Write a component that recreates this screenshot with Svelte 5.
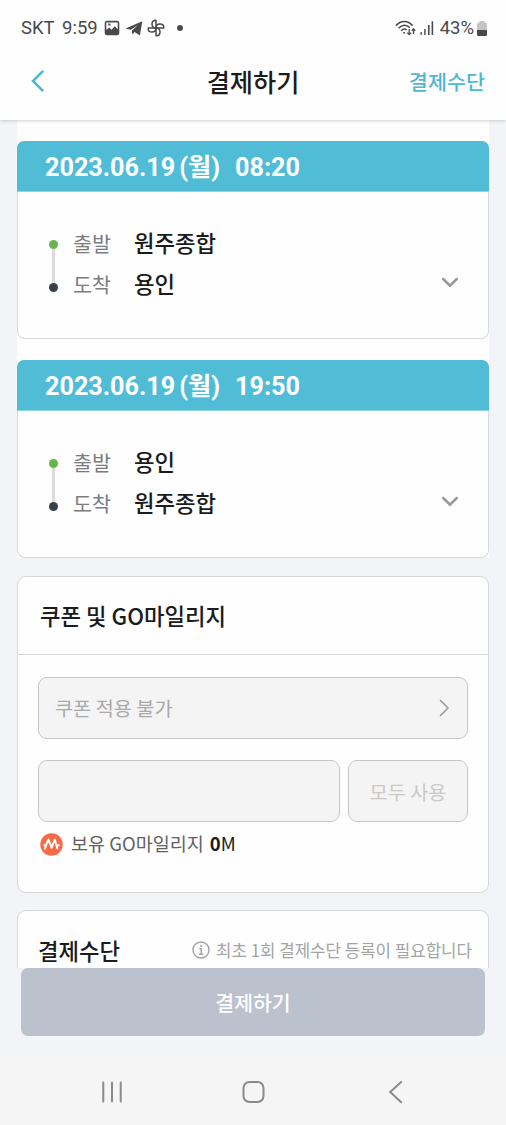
<script>
  const trips = [
    { date: '2023.06.19', day: '(월)', time: '08:20', from: '원주종합', to: '용인' },
    { date: '2023.06.19', day: '(월)', time: '19:50', from: '용인', to: '원주종합' }
  ];
</script>

<div class="phone">
  <div class="status">
    <span class="carrier">SKT</span>
    <span class="clock">9:59</span>
    <svg class="s-img" width="16" height="16" viewBox="0 0 16 16">
      <path fill="#4a4a4a" fill-rule="evenodd" d="M3 .7h10a2.300 2.300 0 0 1 2.300 2.300v10a2.300 2.300 0 0 1-2.300 2.300H3A2.300 2.300 0 0 1 .7 13V3A2.300 2.300 0 0 1 3 .7ZM2.300 9.800l2.900-2.300 2.300 2.200 3.300-3.500 2.900 3V2.500H2.300ZM4.200 3.400h2.200v2.200H4.200Z" />
    </svg>
    <svg class="s-tg" width="18" height="16" viewBox="0 0 18 16">
      <path fill="#4a4a4a" d="M.5 8.400 17.300 1.200 14.900 15.600 9.600 11.900 7.500 14.500 6.800 10.800 12.600 5.300 5.800 9.700Z" />
    </svg>
    <svg class="s-fan" width="18" height="18" viewBox="0 0 18 18" fill="none" stroke="#4a4a4a" stroke-width="1.500" stroke-linejoin="round">
      <path d="M9 9V1.200H8.600C6.200 1.200 5 3 5 5c0 2.200 1.500 4 4 4Z" />
      <path d="M9 9H16.800V8.600C16.800 6.200 15 5 13 5c-2.200 0-4 1.500-4 4Z" />
      <path d="M9 9V16.800H9.400C11.800 16.800 13 15 13 13c0-2.200-1.500-4-4-4Z" />
      <path d="M9 9H1.200V9.400C1.200 11.800 3 13 5 13c2.200 0 4-1.500 4-4Z" />
    </svg>
    <span class="dot"></span>
    <span class="grow"></span>
    <svg class="s-wifi" width="21" height="16" viewBox="0 0 21 16" fill="none" stroke="#4a4a4a" stroke-width="1.600">
      <path d="M1 5.600C5.800.2 12.800.2 17.600 5.600" />
      <path d="M3.600 8.300C7.200 4.300 11.400 4.300 14.800 7.600" />
      <path d="M6.200 10.700C8.200 8.700 10 8.600 11.800 9.800" />
      <circle cx="9.200" cy="12.700" r="1" fill="#4a4a4a" stroke="none" />
      <path stroke-width="1.300" d="M14.200 9v5.500M12.200 12.600l2 2 2-2M18.500 14V9M16.700 10.800l1.800-1.900 1.800 1.900" />
    </svg>
    <svg class="s-sig" width="14" height="14" viewBox="0 0 14 14" fill="#4a4a4a">
      <path d="M.5 11h1.300V14H.5ZM4.200 8h1.400V14H4.200ZM8 4h1.600v10H8ZM11.600.3h1.600V14h-1.600Z" />
    </svg>
    <span class="pct">43%</span>
    <svg class="s-bat" width="10" height="15" viewBox="0 0 10 15">
      <path fill="#c4c4c4" d="M2.500 0h5v1.500h1A1.500 1.500 0 0 1 10 3v6.500H0V3a1.500 1.500 0 0 1 1.500-1.500h1Z" />
      <path fill="#4a4a4a" d="M0 9h10v4.500A1.500 1.500 0 0 1 8.500 15h-7A1.500 1.500 0 0 1 0 13.500Z" />
    </svg>
  </div>

  <header>
    <svg class="back" width="14" height="24" viewBox="0 0 14 24" fill="none" stroke="#50b7cf" stroke-width="2.600">
      <path d="M13.200 1.800 3 12 13.200 22.200" />
    </svg>
    <h1>결제하기</h1>
    <a class="methods" href="#methods">결제수단</a>
  </header>

  <main>
    <div class="trips">
      {#each trips as t}
        <section class="trip">
          <div class="trip-head">
            <span>{t.date}</span><span class="day">{t.day}</span><span>{t.time}</span>
          </div>
          <div class="trip-body">
            <div class="rail"><i class="start"></i><i class="line"></i><i class="end"></i></div>
            <dl>
              <dt>출발</dt><dd>{t.from}</dd>
              <dt>도착</dt><dd>{t.to}</dd>
            </dl>
            <svg class="down" width="18" height="12" viewBox="0 0 18 12" fill="none" stroke="#999" stroke-width="2.500" stroke-linecap="round">
              <path d="M2.200 2 9 8.700 15.800 2" />
            </svg>
          </div>
        </section>
      {/each}
    </div>

    <section class="panel coupon">
      <h2>쿠폰 및 GO마일리지</h2>
      <div class="fields">
        <div class="box select">
          <span>쿠폰 적용 불가</span>
          <svg width="12" height="18" viewBox="0 0 12 18" fill="none" stroke="#999" stroke-width="1.500">
            <path d="M2 1 10 9 2 17" />
          </svg>
        </div>
        <div class="row">
          <div class="box amount"></div>
          <div class="box all">모두 사용</div>
        </div>
        <div class="mileage">
          <svg width="23" height="23" viewBox="0 0 23 23">
            <circle cx="11.500" cy="11.500" r="11.200" fill="#f66b45" />
            <path fill="none" stroke="#fff" stroke-width="2" stroke-linecap="round" stroke-linejoin="round" d="M4.200 12.200H6L8.400 6.600 11.600 14.600 14.800 6.600 17.300 15.600M6 12.400 4.900 15.600M17 12.200H18.800" />
          </svg>
          <span class="own">보유 GO마일리지</span>
          <span class="amt"><b>0</b>M</span>
        </div>
      </div>
    </section>

    <section class="panel pay">
      <h2>결제수단</h2>
      <svg width="18" height="18" viewBox="0 0 18 18" fill="none" stroke="#a3a3a3" stroke-width="1.400">
        <circle cx="9" cy="9" r="8" />
        <path d="M7.400 7.700H9.200V13M7 13.200H11.200" />
        <circle cx="9" cy="5" r="1.100" fill="#a3a3a3" stroke="none" />
      </svg>
      <p>최초 1회 결제수단 등록이 필요합니다</p>
    </section>
  </main>

  <div class="cta"><button>결제하기</button></div>

  <nav>
    <svg width="24" height="24" viewBox="0 0 24 24" stroke="#8a8a8a" stroke-width="2" stroke-linecap="round">
      <path d="M3.300 2.500v19M12 2.500v19M20.700 2.500v19" />
    </svg>
    <svg width="24" height="24" viewBox="0 0 24 24" fill="none" stroke="#8a8a8a" stroke-width="2">
      <rect x="1.500" y="2" width="20" height="20" rx="6" />
    </svg>
    <svg width="24" height="24" viewBox="0 0 24 24" fill="none" stroke="#8a8a8a" stroke-width="2" stroke-linecap="round">
      <path d="M17.200 2 6.200 12l11 10.300" />
    </svg>
  </nav>
</div>

<style>
  .phone {
    width: 506px;
    height: 1125px;
    display: flex;
    flex-direction: column;
    overflow: hidden;
    background: #f3f4f7;
    font-family: 'Noto Sans CJK KR', sans-serif;
    color: #1b1b1b;
  }
  .phone * { box-sizing: border-box; }
  h1, h2, p, dl, dd { margin: 0; }
  svg { display: block; flex: none; }

  .status {
    flex: none;
    height: 50px;
    padding: 6px 19px 0 21px;
    display: flex;
    align-items: center;
    background: #fefefe;
    color: #4a4a4a;
    font: 18.500px/20px Roboto, sans-serif;
    white-space: nowrap;
    position: relative;
    z-index: 2;
  }
  .carrier { width: 41px; }
  .clock { width: 42px; }
  .s-tg { margin-left: 5px; }
  .s-fan { margin-left: 4px; }
  .dot { width: 6px; height: 6px; border-radius: 50%; background: #4a4a4a; margin-left: 12px; }
  .grow { flex: 1; }
  .s-sig { margin-left: 4px; }
  .pct { margin: 0 3px 0 6px; }

  header {
    flex: none;
    height: 70px;
    padding: 0 21px 8px 30px;
    display: grid;
    grid-template-columns: 1fr auto 1fr;
    align-items: center;
    background: #fefefe;
    box-shadow: 0 1px 3px rgba(0, 0, 0, 0.18);
    z-index: 1;
  }
  h1 { margin-right: 9px; font-size: 25.200px; line-height: 36px; font-weight: 500; }
  .methods {
    justify-self: end;
    color: #50b7cf;
    font-size: 20.700px;
    line-height: 30px;
    font-weight: 500;
    text-decoration: none;
  }

  main {
    flex: none;
    height: 848px;
    padding: 0 17px;
    overflow: hidden;
    display: flex;
    flex-direction: column;
  }
  .trips {
    flex: none;
    display: flex;
    flex-direction: column;
    gap: 21px;
    padding-top: 21px;
    background: #fefefe;
  }
  .trip {
    height: 198px;
    border-radius: 8px;
    border: 1px solid #d6d7d9;
    border-top: 0;
    background: #fefefe;
  }
  .trip-head {
    height: 51px;
    margin: 0 -1px;
    padding: 3px 0 0 28px;
    display: flex;
    align-items: center;
    border-radius: 7px 7px 0 0;
    background: #51bcd6;
    color: #fff;
    font: bold 25.200px/30px Roboto, 'Noto Sans CJK KR', sans-serif;
    border-bottom: 1px solid #8fd2e3;
  }
  .day { margin: 0 15px 0 4px; }
  .trip-body { display: flex; padding: 32px 29px 0 31px; }
  .rail {
    width: 9px;
    padding-top: 16px;
    display: flex;
    flex-direction: column;
    align-items: center;
  }
  .rail i { display: block; width: 9px; height: 9px; border-radius: 50%; }
  .rail .start { background: #67b44e; }
  .rail .end { background: #38404c; }
  .rail .line { width: 3px; height: 33.500px; border-radius: 0; background: #dcdcdc; }
  dl {
    flex: 1;
    margin-top: -1px;
    padding-left: 15px;
    display: grid;
    grid-template-columns: 61px 1fr;
    grid-auto-rows: 41px;
    line-height: 41px;
  }
  dt { font-size: 20.700px; color: #7c7c7c; }
  dd { margin-top: -1px; font-size: 22.300px; font-weight: 500; }
  .down { margin-top: 53px; }

  .panel {
    flex: none;
    border: 1px solid #d6d7d9;
    border-radius: 9px;
    background: #fefefe;
  }
  h2 { font-size: 22.300px; font-weight: 500; }
  .coupon { height: 317px; margin-top: 18px; }
  .coupon h2 { height: 78px; line-height: 76px; padding-left: 22px; border-bottom: 1px solid #d3d4d6; }
  .fields { padding: 22px 20px 0; }
  .box {
    display: flex;
    align-items: center;
    border: 1px solid #c6c6c6;
    border-radius: 9px;
    background: #f4f4f4;
    font-size: 19.700px;
  }
  .select { height: 62px; padding: 0 17px 2px 16px; justify-content: space-between; color: #a9a9a9; }
  .select svg { position: relative; top: 1px; }
  .row { display: flex; gap: 8px; margin-top: 21px; }
  .row .box { height: 62px; }
  .amount { flex: 1; }
  .all { width: 120px; justify-content: center; color: #c9c9c9; }
  .mileage { display: flex; align-items: center; margin-top: 7px; padding-left: 2px; height: 30px; font-size: 18.500px; }
  .mileage span { margin-top: -2px; }
  .mileage .own { margin: -2px 6px 0 8px; color: #626262; }
  .mileage b { font-weight: 700; }

  .pay {
    height: 120px;
    margin-top: 17px;
    padding: 19px 16px 0 20px;
    display: flex;
    align-items: flex-start;
  }
  .pay h2 { flex: 1; line-height: 40px; }
  .pay svg { margin: 11px 6px 0 0; }
  .pay p { font-size: 16.800px; line-height: 40px; color: #a4a4a4; white-space: nowrap; }

  .cta { flex: none; height: 89px; padding: 0 21px; }
  button {
    display: block;
    width: 100%;
    height: 68px;
    padding: 0;
    border: 0;
    border-radius: 7px;
    background: #bbc2cd;
    color: #fff;
    font: 500 20.500px/68px 'Noto Sans CJK KR', sans-serif;
  }
  nav {
    flex: 1;
    padding: 1px 98px 0 100px;
    display: flex;
    align-items: center;
    justify-content: space-between;
    background: #f5f5f5;
  }
</style>
